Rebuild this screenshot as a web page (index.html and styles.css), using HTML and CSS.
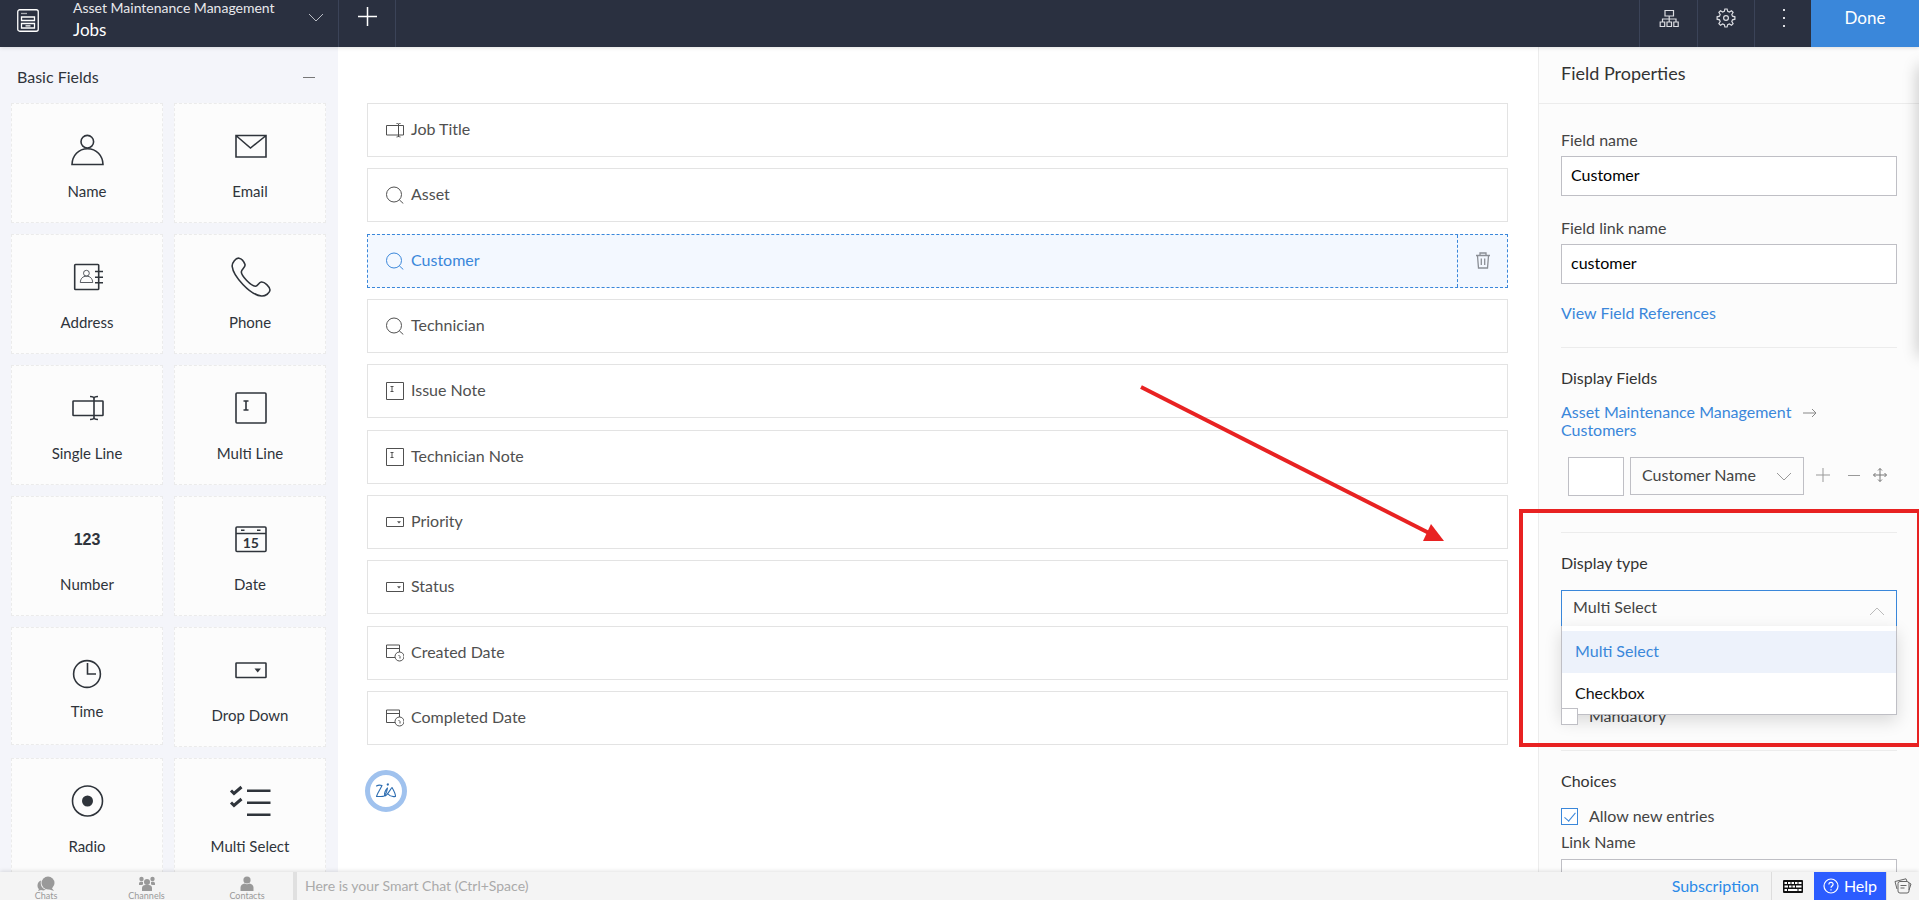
FILE: index.html
```html
<!DOCTYPE html>
<html lang="en">
<head>
<meta charset="utf-8">
<title>Asset Maintenance Management - Jobs</title>
<link rel="stylesheet" href="styles.css">
</head>
<body>
<svg class="sprite" aria-hidden="true">
  <symbol id="i-text" viewBox="0 0 18 18"><path d="M.5 4.500h17v9.500H.5zM12.500 2.500v13.500M10.500 2.500h1l1 1 1-1h1M10.500 16h1l1-1 1 1h1"/></symbol>
  <symbol id="i-lookup" viewBox="0 0 18 18"><circle cx="8" cy="8.500" r="7.500"/><path d="M13.300 13.800l4 3.700"/></symbol>
  <symbol id="i-note" viewBox="0 0 18 18"><path d="M.5.500h17v17H.5zM4.500 4.500h3M6 4.500v5M4.500 9.500h3"/></symbol>
  <symbol id="i-drop" viewBox="0 0 18 18"><path d="M.5 4.500h17v9H.5z"/><path d="M11 8.200h4l-2 2.300z" class="solid"/></symbol>
  <symbol id="i-datetime" viewBox="0 0 18 18"><path d="M9 13.500H.5V1h13v7M.5 4.500h13"/><circle cx="13.500" cy="12.500" r="4.500"/><path d="M12.500 11l1.500 1.500v2"/></symbol>
  <symbol id="i-chevron" viewBox="0 0 16 9"><path d="M1 1l7 7 7-7"/></symbol>
</svg>

<header class="topbar">
  <div class="topbar-app">
    <svg class="app-icon" viewBox="0 0 22 24"><rect x=".75" y=".75" width="20.500" height="21.500" rx="2"/><path d="M4 4.500h6" class="dim"/><path d="M4.500 8h13v3.500h-13zM4.500 14.500h13V19h-13zM8.500 16.800h5"/></svg>
    <div class="app-titles">
      <div class="app-name">Asset Maintenance Management</div>
      <h1 class="form-name">Jobs</h1>
    </div>
    <button class="icon-btn" aria-label="Switch form"><svg class="app-chevron" viewBox="0 0 16 9"><use href="#i-chevron"/></svg></button>
  </div>
  <button class="top-btn" aria-label="Add form"><svg class="plus-icon" viewBox="0 0 19 19"><path d="M9.500 0v19M0 9.500h19"/></svg></button>
  <div class="topbar-space"></div>
  <button class="top-btn" aria-label="Structure"><svg class="tool-icon" viewBox="0 0 20 20"><path d="M6 2.500h8.500V8H6zM10.200 8v3M3.500 14v-3h13.500v3M10.200 11v3M1.200 14h4.500v4.500H1.200zM8 14h4.500v4.500H8zM14.800 14h4.400v4.500h-4.400z"/></svg></button>
  <button class="top-btn" aria-label="Settings"><svg class="tool-icon" viewBox="0 0 20 20"><path d="M8.900 1h2.200l.6 2.400 1.700.7 2.100-1.300 1.600 1.600-1.300 2.100.7 1.700 2.400.6v2.400l-2.400.6-.7 1.700 1.300 2.100-1.600 1.600-2.100-1.300-1.700.7-.6 2.400H8.900l-.6-2.400-1.700-.7-2.100 1.300-1.600-1.600 1.300-2.100-.7-1.700L1.100 11.200V8.800l2.400-.6.700-1.700-1.300-2.100 1.600-1.600 2.100 1.300 1.700-.7z"/><circle cx="10" cy="10" r="2.400"/></svg></button>
  <button class="top-btn" aria-label="More"><svg class="tool-icon" viewBox="0 0 20 20"><path class="dots" d="M10 1h2v2h-2zM10 9h2v2h-2zM10 17h2v2h-2z"/></svg></button>
  <button class="done-btn">Done</button>
</header>

<main class="workspace">
  <aside class="palette">
    <div class="palette-head"><h2>Basic Fields</h2><button class="icon-btn collapse" aria-label="Collapse"><span></span></button></div>
    <div class="palette-grid">
      <button class="field-card"><svg viewBox="0 0 40 40"><circle cx="20.300" cy="15.700" r="6.300"/><path d="M5 38.500c.3-9 6.500-15.700 15.500-15.700S35.700 29.500 36 38.500z"/></svg><span>Name</span></button>
      <button class="field-card"><svg viewBox="0 0 40 40"><path d="M6 9.500h30v21.500H6zM6.500 10l14 12 15-12"/></svg><span>Email</span></button>
      <button class="field-card"><svg viewBox="0 0 40 40"><rect x="7.700" y="7.500" width="24" height="25" rx=".8"/><path d="M28 14.500h8M28 20.300h8M28 25.700h8"/><g class="thin"><circle cx="19.400" cy="16.200" r="2.900"/><path d="M13.300 25.500c.2-4 2.500-6.300 6.200-6.300s6 2.300 6.200 6.300z"/></g></svg><span>Address</span></button>
      <button class="field-card"><svg viewBox="0 0 40 40"><path d="M2.200 9.500C1.800 5.500 6 .7 9 1.200c2.500.4 5 3.600 6 6.300.9 2.700-3.800 4.800-3.700 7.500.2 4 9.500 13.800 14 14.200 2.500.2 3.300-3.800 6-4.200 3.200-.4 8.500 4.500 8.700 8 .1 3-4.700 6.300-8.500 6C20 38 3.200 19 2.200 9.500z"/></svg><span>Phone</span></button>
      <button class="field-card"><svg viewBox="0 0 40 40"><rect x="6" y="13" width="30" height="14.500" rx=".6"/><path d="M27 9.500v21M23 8.500c2.500 0 4 .5 4 2 0-1.500 1.500-2 4-2M23 31.500c2.500 0 4-.5 4-2 0 1.500 1.500 2 4 2"/></svg><span>Single Line</span></button>
      <button class="field-card"><svg viewBox="0 0 40 40"><rect x="6" y="5" width="30" height="30" rx="1"/><path d="M13.500 13h5M16 13v9M13.500 22h5"/></svg><span>Multi Line</span></button>
      <button class="field-card"><b class="numerals">123</b><span>Number</span></button>
      <button class="field-card"><svg viewBox="0 0 40 40"><rect x="6" y="8" width="30" height="24.500" rx="1"/><path d="M6 14.500h30M11 11.200h3.500M27 11.200h3.500"/><text x="20.800" y="28.500" text-anchor="middle">15</text></svg><span>Date</span></button>
      <button class="field-card field-card-compact"><svg viewBox="0 0 40 40"><circle cx="20" cy="24" r="13.400"/><path d="M20.500 13v11h8.500"/></svg><span>Time</span></button>
      <button class="field-card"><svg viewBox="0 0 40 40"><rect x="6" y="13" width="30" height="14.500" rx=".6"/><path class="solid" d="M24.500 18.500h6.500L27.700 22.500z"/></svg><span>Drop Down</span></button>
      <button class="field-card"><svg viewBox="0 0 40 40"><circle cx="20.500" cy="20" r="15"/><circle class="solid" cx="20.500" cy="20" r="5.500"/></svg><span>Radio</span></button>
      <button class="field-card"><svg viewBox="0 0 40 40"><path class="thick" d="M17 9.700h23.500M17 21.700h23.500M17 33.700h23.500"/><path class="thicker" d="M1 9.500l3 3L11.500 6M1 21.500l3 3 7.500-6.500"/></svg><span>Multi Select</span></button>
    </div>
  </aside>

  <section class="canvas">
    <ul class="form-fields">
      <li class="form-field"><svg viewBox="0 0 18 18"><use href="#i-text"/></svg><span>Job Title</span></li>
      <li class="form-field"><svg viewBox="0 0 18 18"><use href="#i-lookup"/></svg><span>Asset</span></li>
      <li class="form-field selected"><svg viewBox="0 0 18 18"><use href="#i-lookup"/></svg><span>Customer</span>
        <button class="delete-btn" aria-label="Delete field"><svg viewBox="0 0 16 17"><path d="M1 3.500h14M5 3V1h6v2M2.500 4l1 12h9l1-12M6.300 6.500v6.500M9.700 6.500v6.500"/></svg></button></li>
      <li class="form-field"><svg viewBox="0 0 18 18"><use href="#i-lookup"/></svg><span>Technician</span></li>
      <li class="form-field"><svg viewBox="0 0 18 18"><use href="#i-note"/></svg><span>Issue Note</span></li>
      <li class="form-field"><svg viewBox="0 0 18 18"><use href="#i-note"/></svg><span>Technician Note</span></li>
      <li class="form-field"><svg viewBox="0 0 18 18"><use href="#i-drop"/></svg><span>Priority</span></li>
      <li class="form-field"><svg viewBox="0 0 18 18"><use href="#i-drop"/></svg><span>Status</span></li>
      <li class="form-field"><svg viewBox="0 0 18 18"><use href="#i-datetime"/></svg><span>Created Date</span></li>
      <li class="form-field"><svg viewBox="0 0 18 18"><use href="#i-datetime"/></svg><span>Completed Date</span></li>
    </ul>
    <button class="zia-btn" aria-label="Zia assistant"><svg viewBox="0 0 22 16"><path d="M1.500 3c1.500-1 4-1 5.500-.5C5.500 6 2.500 9.500 1.500 13.500c2.500-.3 6 .5 7.500-.5 2-1.500 3-5 3.500-8-2 2-4 6-2.500 8 2-.5 5-6 7-8.500 1.500 2.500 3.500 6 3.500 9-3 .5-6-.5-7.500-2.500"/><circle cx="12.800" cy="1.500" r=".6"/></svg></button>
  </section>

  <aside class="properties">
    <h2 class="properties-title">Field Properties</h2>
    <form class="properties-body">
      <section class="group group-name">
        <label for="field-name">Field name</label>
        <input class="text-input" id="field-name" type="text" value="Customer">
        <label for="field-link" class="second-label">Field link name</label>
        <input class="text-input" id="field-link" type="text" value="customer">
        <a href="#references" class="references">View Field References</a>
      </section>
      <section class="group group-display">
        <h3>Display Fields</h3>
        <p class="source"><a href="#app">Asset Maintenance Management</a><svg class="arrow-icon" viewBox="0 0 14 10"><path d="M0 5h13M9 1l4 4-4 4"/></svg><br><a href="#customers">Customers</a></p>
        <div class="display-row">
          <input class="prefix-input" type="text" aria-label="Prefix">
          <div class="select-wrap name-wrap">
            <select class="name-select" aria-label="Display field"><option>Customer Name</option></select>
            <svg class="chevron" viewBox="0 0 16 9"><use href="#i-chevron"/></svg>
          </div>
          <div class="row-tools">
            <button type="button" class="icon-btn" aria-label="Add"><svg viewBox="0 0 14 14"><path d="M7 0v14M0 7h14"/></svg></button>
            <button type="button" class="icon-btn" aria-label="Remove"><svg viewBox="0 0 14 14"><path d="M1 7.500h12"/></svg></button>
            <button type="button" class="icon-btn" aria-label="Move"><svg class="move" viewBox="0 0 14 14"><path d="M7 .5v13M.5 7h13M5 2.500l2-2 2 2M5 11.500l2 2 2-2M2.500 5l-2 2 2 2M11.500 5l2 2-2 2"/></svg></button>
          </div>
        </div>
      </section>
      <section class="group group-type">
        <h3><label for="display-type">Display type</label></h3>
        <div class="select-wrap type-wrap">
          <select class="type-select" id="display-type"><option>Multi Select</option><option>Checkbox</option></select>
          <svg class="chevron up" viewBox="0 0 16 9"><use href="#i-chevron"/></svg>
          <ul class="type-menu" role="listbox">
            <li role="option" class="active" aria-selected="true">Multi Select</li>
            <li role="option">Checkbox</li>
          </ul>
        </div>
        <label class="check-row mandatory"><input type="checkbox"><span>Mandatory</span></label>
      </section>
      <section class="group group-choices">
        <h3>Choices</h3>
        <label class="check-row"><input type="checkbox" checked><span>Allow new entries</span></label>
        <label for="link-name" class="link-label">Link Name</label>
        <input class="text-input" id="link-name" type="text" value="Add New">
      </section>
    </form>
  </aside>
</main>

<footer class="chatbar">
  <nav class="chat-tabs">
    <a href="#chats"><svg viewBox="0 0 18 14"><circle cx="11" cy="6" r="6.500"/><path d="M14 10l3 4-6-2zM4 3.500C-.5 5 0 11 2 12l-1 2 3-1c3 1 4 0 5-.5C5 12 3 8 4 3.500z"/></svg>Chats</a>
    <a href="#channels"><svg viewBox="0 0 18 14"><circle cx="9" cy="5" r="3"/><circle cx="3.500" cy="2" r="2.200"/><circle cx="14.500" cy="2" r="2.200"/><path d="M4 14v-3c0-2.500 2-3 5-3s5 .5 5 3v3zM1 8V6.500C1 5 2.500 4.500 5 5v2.500L3.500 8zM17 8V6.500C17 5 15.500 4.500 13 5v2.500l1.500.5z"/></svg>Channels</a>
    <a href="#contacts"><svg viewBox="0 0 18 14"><circle cx="9" cy="3" r="3.600"/><path d="M2.500 14v-3.500C2.500 8 4.500 7 6.500 6.500c1.500 1 3.500 1 5 0 2 .5 4 1.500 4 4V14z"/></svg>Contacts</a>
  </nav>
  <input class="smart-chat" type="text" aria-label="Smart Chat" placeholder="Here is your Smart Chat (Ctrl+Space)">
  <a class="subscription" href="#subscription">Subscription</a>
  <button class="bar-btn keyboard" aria-label="Keyboard shortcuts"><svg viewBox="0 0 20 13"><rect x="0" y="0" width="20" height="13" rx="1" fill="#111"/><path d="M1.500 3h2.500M5 3h2.500M8.500 3H11M12 3h2.500M15.500 3h3M1.500 6.500h3.500M6 6.500h2.500M9.500 6.500H12M13 6.500h5.500M1.500 10H4M5 10h9.500M15.500 10h3" stroke="#fff" stroke-width="2.200"/></svg></button>
  <button class="help-btn"><svg viewBox="0 0 16 16"><circle cx="8" cy="8" r="7"/><path d="M5.900 6.400c0-3 4.400-2.600 4.200 0C10 8 8 8 8 9.800M8 11.200v1.200"/></svg>Help</button>
  <button class="bar-btn cards" aria-label="Cards"><svg viewBox="0 0 18 16"><path d="M3 11L1 3.500 12 .8l1 2.500M15 12l2-6-2.500-1.500"/><rect x="4" y="3.500" width="11" height="11.500" rx="2"/><path d="M6.500 7.500h6M6.500 10h4"/></svg></button>
</footer>

<div class="side-shadow"></div>
<svg class="callout-arrow" viewBox="0 0 302 155" aria-hidden="true"><path d="M-1 0l290 147" stroke="#e82222" stroke-width="4"/><path d="M289 137l13 17h-21z" fill="#e82222"/></svg>
<div class="callout-box"></div>
</body>
</html>
```
FILE: styles.css
```css
* { box-sizing: border-box; }
html, body { height: 100%; }
body {
  margin: 0;
  display: flex;
  flex-direction: column;
  overflow: hidden;
  position: relative;
  font: 16px/20px Lato, "Open Sans", sans-serif;
  color: #444;
  background: #fff;
}
button, input, select { font: inherit; color: inherit; }
button { border: 0; padding: 0; background: none; cursor: pointer; }
h1, h2, h3, p, ul { margin: 0; padding: 0; font-weight: 400; font-size: 16px; }
ul { list-style: none; }
a { color: #3a87da; text-decoration: none; }
svg { display: block; fill: none; stroke: currentColor; overflow: visible; }
.sprite { position: absolute; width: 0; height: 0; }
.solid { fill: currentColor; stroke: none; }
.icon-btn { display: flex; align-items: center; justify-content: center; }

/* Top bar */
.topbar {
  flex: none;
  display: flex;
  height: 47px;
  background: #2a3040;
  color: #fff;
  box-shadow: 0 1px 4px rgba(0, 0, 0, .12);
  position: relative;
  z-index: 2;
}
.topbar-app { display: flex; width: 338px; padding: 0 14px 0 17px; }
.app-icon { width: 22px; height: 24px; margin: 9px 34px 0 0; stroke-width: 1.3; flex: none; }
.app-icon .dim { opacity: .6; }
.app-titles { flex: 1; }
.app-name { font-size: 14px; line-height: 16px; color: #e8e8ec; }
.form-name { font-size: 17px; line-height: 20px; padding-top: 4px; }
.app-chevron { width: 16px; height: 9px; color: #b9bcc4; }
.topbar-app .icon-btn { height: 34px; }
.top-btn {
  display: flex;
  justify-content: center;
  width: 57px;
  border-left: 1px solid #3b4358;
}
.topbar-app + .top-btn { width: 58px; border-right: 1px solid #3b4358; }
.topbar-space + .top-btn { width: 58px; }
.plus-icon { width: 19px; height: 19px; margin-top: 7px; stroke-width: 1.5; }
.tool-icon { width: 20px; height: 20px; margin-top: 8px; stroke-width: 1.2; color: #dcdde2; }
.tool-icon .dots { fill: currentColor; stroke: none; }
.topbar-space { flex: 1; }
.done-btn { width: 108px; padding-bottom: 11px; background: #3a87da; font-size: 17px; }

/* Palette */
.workspace { flex: 1; min-height: 0; display: flex; overflow: hidden; }
.palette { flex: none; width: 338px; padding: 0 12px 0 11px; background: #f4f5fa; color: #2f343b; overflow: hidden; }
.palette-head { display: flex; justify-content: space-between; align-items: center; height: 56px; padding: 4px 11px 0 6px; }
.collapse { width: 12px; height: 20px; }
.collapse span { width: 12px; height: 1px; background: #777; }
.palette-grid { display: grid; grid-template-columns: 1fr 1fr; gap: 11px; align-items: start; }
.field-card {
  display: flex;
  flex-direction: column;
  align-items: center;
  gap: 15px;
  padding: 22px 0 21px;
  background: #fcfcfc;
  border: 1px dashed #ebebeb;
  font-size: 15px;
  line-height: 20px;
}
.field-card-compact { gap: 11px; padding-bottom: 23px; }
.field-card svg, .numerals { width: 40px; height: 40px; stroke-width: 1.6; }
.field-card .thin { stroke-width: .8; }
.field-card .thick { stroke-width: 2.4; }
.field-card .thicker { stroke-width: 3; }
.field-card text { font: 700 14px Lato, sans-serif; fill: currentColor; stroke: none; }
.numerals { font: 700 16px/42px "Liberation Sans", Arial, sans-serif; text-align: center; }

/* Form canvas */
.canvas { flex: 1; min-width: 0; padding: 56px 30px 0 29px; }
.form-fields { display: flex; flex-direction: column; justify-content: space-between; min-height: 642px; }
.form-field { display: flex; align-items: center; gap: 7px; height: 54px; padding-left: 18px; border: 1px solid #e3e3e3; color: #505050; }
.form-field svg { width: 18px; height: 18px; stroke-width: 1; }
.form-field span { padding-bottom: 2px; }
.form-field.selected { border: 1px dashed #3a87da; background: #f3f8ff; color: #3a87da; }
.form-field .delete-btn {
  display: flex;
  align-items: center;
  justify-content: center;
  align-self: stretch;
  width: 50px;
  margin-left: auto;
  border-left: 1px dashed #3a87da;
  color: #8b8f96;
}
.form-field .delete-btn svg { width: 16px; height: 17px; stroke-width: 1.3; }
.zia-btn {
  display: flex;
  align-items: center;
  justify-content: center;
  width: 42px;
  height: 42px;
  margin: 25px 0 0 -2px;
  border: 5px solid #a0c2ee;
  border-radius: 50%;
  color: #2c6cb0;
}
.zia-btn svg { width: 22px; height: 16px; stroke-width: 1.1; stroke-linecap: round; stroke-linejoin: round; }

/* Properties */
.properties { flex: none; width: 381px; background: #fcfcfc; border-left: 1px solid #ececec; overflow: hidden; }
.properties-title { height: 57px; padding: 16px 22px 0; font-size: 18px; color: #333; border-bottom: 1px solid #ececec; }
.properties-body { padding: 0 22px; }
.properties label { display: block; }
.group { border-bottom: 1px solid #ececec; }
.group:last-child { border-bottom: 0; }
.group h3 { color: #333; }
.text-input {
  display: block;
  width: 100%;
  height: 40px;
  margin-top: 6px;
  padding: 0 9px 3px;
  border: 1px solid #bfbfc5;
  border-radius: 0;
  background: #fff;
  color: #000;
}
.group-name { padding: 26px 0 24px; }
.group-name .second-label { margin-top: 22px; }
.references { display: block; margin-top: 19px; }
.group-display { height: 185px; padding-top: 20px; }
.source { margin-top: 15px; line-height: 18px; }
.arrow-icon { display: inline-block; width: 14px; height: 10px; margin-left: 12px; color: #888; }
.display-row { display: flex; margin: 18px 0 0 7px; }
.prefix-input { width: 56px; height: 39px; margin-right: 6px; padding: 0 8px; border: 1px solid #bfbfc5; background: #fff; border-radius: 0; }
.select-wrap { position: relative; }
.name-wrap { width: 174px; }
select { appearance: none; width: 100%; border: 1px solid #bfbfc5; border-radius: 0; background: transparent; outline: 0; }
.name-select { height: 38px; padding: 0 11px 2px; }
.chevron { position: absolute; right: 12px; top: 15px; width: 16px; height: 9px; color: #999; pointer-events: none; }
.chevron.up { top: 17px; transform: rotate(180deg); color: #bbb; }
.row-tools { display: flex; flex: 1; gap: 17px; padding-left: 12px; color: #999; height: 36px; }
.row-tools svg { width: 14px; height: 14px; }
.row-tools .move { color: #777; }
.row-tools .icon-btn:last-child { margin-left: -5px; }
.group-type { height: 218px; padding-top: 20px; }
.group-type h3 { margin-bottom: 17px; }
.type-select { height: 40px; padding: 0 11px 6px; border-color: #3a87da; }
.type-menu {
  position: absolute;
  left: 0;
  right: 0;
  top: 36px;
  padding-top: 5px;
  background: #fff;
  border: 1px solid #bfbfc5;
  border-top: 0;
  box-shadow: 0 6px 16px rgba(0, 0, 0, .14);
  color: #111;
}
.type-menu li { padding: 9px 13px 12px; line-height: 21px; }
.type-menu li:last-child { padding-bottom: 11px; }
.type-menu .active { background: #edf2fb; color: #3a87da; }
.properties .check-row { display: flex; align-items: center; gap: 11px; }
.check-row input { appearance: none; position: relative; width: 17px; height: 17px; margin: 0; border: 1px solid #bfbfc5; background: #fff; }
.check-row input:checked { border-color: #3a87da; }
.check-row input:checked::after {
  content: "";
  position: absolute;
  left: 5px;
  top: 1px;
  width: 5px;
  height: 10px;
  border: solid #3a87da;
  border-width: 0 1px 1px 0;
  transform: rotate(40deg);
}
.mandatory { margin-top: 76px; }
.group-choices { padding-top: 20px; }
.group-choices h3 { margin-bottom: 15px; }
.link-label { margin-top: 6px; }
.group-choices .text-input { margin-top: 7px; }

/* Chat bar */
.chatbar {
  flex: none;
  display: flex;
  align-items: stretch;
  height: 28px;
  overflow: hidden;
  background: #f4f4f4;
  box-shadow: 0 -1px 4px rgba(0, 0, 0, .12);
  position: relative;
  z-index: 3;
}
.chat-tabs { display: flex; justify-content: space-between; width: 293px; padding: 5px 16px 0; }
.chat-tabs a { width: 60px; color: #999; font-size: 9px; line-height: 10px; text-align: center; }
.chat-tabs svg { width: 18px; height: 14px; margin: 0 auto; fill: currentColor; stroke: none; }
.smart-chat { flex: 1; border: 0; border-left: 4px solid #e0e0e0; padding: 0 8px; background: transparent; font-size: 14px; outline: 0; }
.smart-chat::placeholder { color: #aaa; opacity: 1; }
.subscription { padding: 4px 12px 0; color: #2a8ae8; }
.bar-btn { display: flex; align-items: center; justify-content: center; border-left: 1px solid #ddd; }
.keyboard { width: 43px; }
.keyboard svg { width: 20px; height: 13px; stroke: none; }
.help-btn { display: flex; align-items: center; justify-content: center; gap: 5px; width: 72px; background: #2b5cff; color: #fff; }
.help-btn svg { width: 16px; height: 16px; stroke-width: 1.2; }
.cards { width: 33px; color: #666; }
.cards svg { width: 18px; height: 16px; stroke-width: 1; }

/* Overlays */
.side-shadow { position: absolute; right: -10px; top: 66px; width: 10px; height: 290px; box-shadow: 0 0 16px rgba(0, 0, 0, .28); }
.callout-arrow { position: absolute; right: 475px; top: 387px; width: 302px; height: 155px; stroke: none; }
.callout-box { position: absolute; right: -2px; top: 509px; width: 402px; height: 238px; border: 4px solid #e82222; }
```
